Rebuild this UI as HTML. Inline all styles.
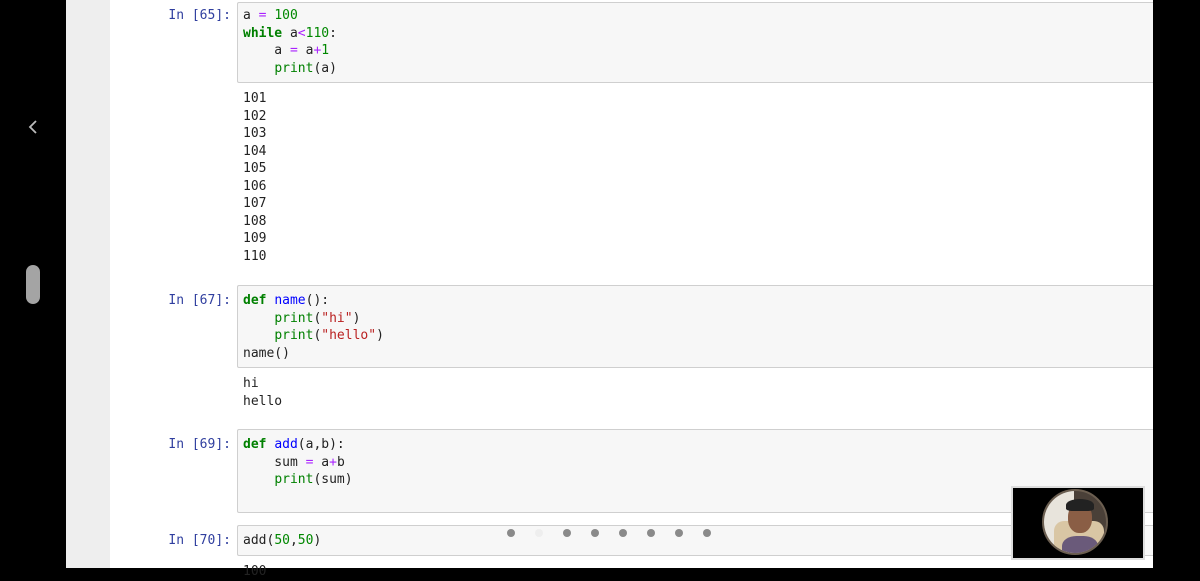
<!DOCTYPE html>
<html><head><style>
body{margin:0;width:1200px;height:568px;overflow:hidden;background:#000;position:relative;font-family:"DejaVu Sans Mono","Liberation Mono",monospace;font-size:13px;}
#page{position:absolute;left:66px;top:0;width:1087px;height:568px;background:#eee;}
#nb{position:absolute;left:110px;top:0;width:1043px;height:568px;background:#fff;}
.p{position:absolute;right:969px;color:#303f9f;line-height:17.5px;white-space:pre;text-align:right;margin-top:1px;}
.cell{position:absolute;left:237px;width:916px;background:#f7f7f7;border:1px solid #cfcfcf;border-right:none;border-radius:2px 0 0 2px;box-sizing:border-box;}
.code{position:absolute;left:243px;line-height:17.5px;white-space:pre;color:#222;margin-top:1px;}
.k{color:#008000;font-weight:bold}.n{color:#080}.o{color:#a2f}.b{color:#008000}.s{color:#ba2121}.f{color:#00f}
.dot{position:absolute;top:529px;width:8px;height:8px;border-radius:50%;background:#8a8a8a;}
</style></head><body>
<div id="page"></div><div id="nb"></div>
<svg style="position:absolute;left:27px;top:119px" width="12" height="16"><path d="M9 2L3 8L9 14" stroke="#bbb" stroke-width="1.8" fill="none"/></svg>
<div style="position:absolute;left:26px;top:265px;width:14px;height:39px;border-radius:7px;background:#a4a4a4"></div>

<div class="cell" style="top:2px;height:81px"></div>
<div class="p" style="top:6px">In [65]:</div>
<div class="code" style="top:6px">a <span class="o">=</span> <span class="n">100</span>
<span class="k">while</span> a<span class="o">&lt;</span><span class="n">110</span>:
    a <span class="o">=</span> a<span class="o">+</span><span class="n">1</span>
    <span class="b">print</span>(a)</div>
<div class="code" style="top:89px">101
102
103
104
105
106
107
108
109
110</div>

<div class="cell" style="top:285px;height:83px"></div>
<div class="p" style="top:291px">In [67]:</div>
<div class="code" style="top:291px"><span class="k">def</span> <span class="f">name</span>():
    <span class="b">print</span>(<span class="s">"hi"</span>)
    <span class="b">print</span>(<span class="s">"hello"</span>)
name()</div>
<div class="code" style="top:374px">hi
hello</div>

<div class="cell" style="top:429px;height:84px"></div>
<div class="p" style="top:435px">In [69]:</div>
<div class="code" style="top:435px"><span class="k">def</span> <span class="f">add</span>(a,b):
    sum <span class="o">=</span> a<span class="o">+</span>b
    <span class="b">print</span>(sum)</div>

<div class="cell" style="top:525px;height:31px"></div>
<div class="p" style="top:531px">In [70]:</div>
<div class="code" style="top:531px">add(<span class="n">50</span>,<span class="n">50</span>)</div>
<div class="code" style="top:562px">100</div>

<div class="dot" style="left:507px"></div>
<div class="dot" style="left:535px;background:#eee"></div>
<div class="dot" style="left:563px"></div>
<div class="dot" style="left:591px"></div>
<div class="dot" style="left:619px"></div>
<div class="dot" style="left:647px"></div>
<div class="dot" style="left:675px"></div>
<div class="dot" style="left:703px"></div>

<div style="position:absolute;left:1011px;top:486px;width:134px;height:74px;background:#ddd"></div>
<div style="position:absolute;left:1013px;top:488px;width:130px;height:70px;background:#000"></div>
<div style="position:absolute;left:1042px;top:489px;width:66px;height:66px;border-radius:50%;background:#4a4038;box-sizing:border-box;border:2px solid #6b5e50;overflow:hidden">
<div style="position:absolute;left:0;top:0;width:30px;height:66px;background:#e8e4dc"></div>
<div style="position:absolute;left:10px;top:30px;width:50px;height:40px;background:#d9c6a4;border-radius:10px"></div>
<div style="position:absolute;left:24px;top:12px;width:24px;height:30px;border-radius:45%;background:#8a5e45"></div>
<div style="position:absolute;left:22px;top:8px;width:28px;height:12px;border-radius:50% 50% 20% 20%;background:#222"></div>
<div style="position:absolute;left:18px;top:45px;width:36px;height:25px;border-radius:40% 40% 0 0;background:#6a5a7a"></div>
</div>
</body></html>
